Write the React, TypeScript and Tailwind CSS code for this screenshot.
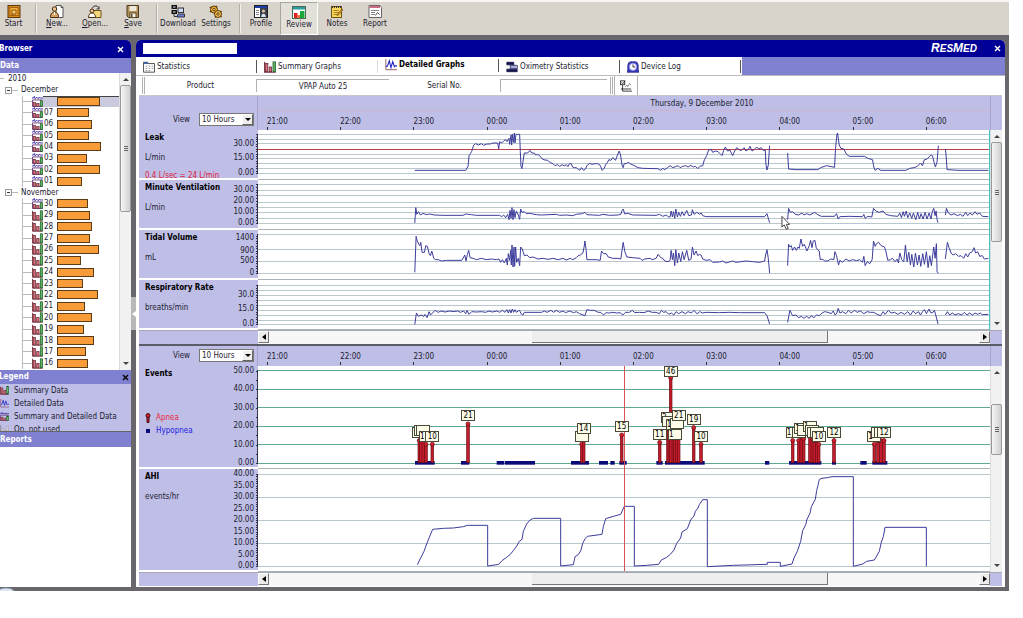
import { Fragment, ReactNode } from "react"
import clsx from "clsx"

/* ---------- Icons ---------- */

const icons: Record<string, ReactNode> = {
	start: (
		<>
			<rect x="1" y="0.5" width="12" height="12" fill="#d98a1c" stroke="#5b3a10" />
			<rect x="3" y="2.5" width="8" height="8" fill="#f5b53c" stroke="#a8620f" />
			<path d="M5 5h4v4H6l-1 1z" fill="#fbd56a" stroke="#8a4a08" />
		</>
	),
	newPatient: (
		<>
			<path d="M6 .5h5l2 2v10H6z" fill="#fff" stroke="#555" />
			<path d="M11 .5v2h2" fill="none" stroke="#555" />
			<circle cx="4.5" cy="4" r="2.2" fill="#f2c48c" stroke="#4a3012" />
			<path d="M.5 12.5c0-4 1.500-5.500 4-5.500s4 1.500 4 5.500z" fill="#d9a066" stroke="#4a3012" />
			<path d="M4.500 7v3" stroke="#fff" />
		</>
	),
	open: (
		<>
			<path d="M4 5.500h9v7H3z" fill="#f4d77a" stroke="#6b5218" />
			<path d="M4 3.500c2-4 6-3 7 0M11 4V1.500M11 4H8.500" fill="none" stroke="#333" />
			<circle cx="4" cy="6" r="2" fill="#f2c48c" stroke="#4a3012" />
			<path d="M.5 12.500c0-3 1.500-4.500 3.500-4.500s3.500 1.500 3.500 4.500z" fill="#fff" stroke="#4a3012" />
		</>
	),
	save: (
		<>
			<path d="M1 .5h11.500v12H2.500L1 11z" fill="#b08d57" stroke="#4a3a1c" />
			<rect x="3.500" y="1" width="7" height="5" fill="#efe9dc" />
			<rect x="4" y="8" width="6" height="4.500" fill="#f7f3e9" stroke="#5b4a28" />
			<rect x="5" y="9" width="1.500" height="3" fill="#5b4a28" />
		</>
	),
	download: (
		<>
			<rect x=".5" y="0" width="5.500" height="4" fill="#111" />
			<rect x=".5" y="5" width="5.500" height="4" fill="#111" />
			<path d="M2 2h2.500M2 7h2.500" stroke="#f0f0f0" strokeWidth="1.200" />
			<path d="M3 9v2.500h3" fill="none" stroke="#333" />
			<rect x="7" y="3" width="5.500" height="4.500" fill="#cfdaf6" stroke="#333" />
			<path d="M6 12h7.500V9H7z" fill="#6d7fd0" stroke="#334" />
		</>
	),
	settings: (
		<>
			<circle cx="5" cy="4.500" r="3.500" fill="#f0a92c" stroke="#5a3a08" />
			<circle cx="5" cy="4.500" r="1.200" fill="#fff4d0" stroke="#5a3a08" />
			<circle cx="9" cy="9" r="3.500" fill="#f3c04e" stroke="#5a3a08" />
			<circle cx="9" cy="9" r="1.200" fill="#fff4d0" stroke="#5a3a08" />
			<path d="M1 2l1 1M8 1L7 2M1 7l1-1M12.500 12l-1-1M12.500 6l-1 1M6 12.500l1-1" stroke="#5a3a08" strokeWidth="1.400" />
		</>
	),
	profile: (
		<>
			<rect x=".5" y=".5" width="13" height="12" fill="#fff" stroke="#222" />
			<rect x="1" y="1" width="12" height="2" fill="#1d3fa8" />
			<path d="M2 5.500h3M2 7.500h3M2 9.500h3" stroke="#888" />
			<rect x="6" y="3" width="7" height="9.500" fill="#39404f" />
			<circle cx="9.500" cy="6" r="1.600" fill="#e8c29a" />
			<path d="M7.200 12c0-4.500 4.600-4.500 4.600 0z" fill="#dfe4f0" />
		</>
	),
	review: (
		<>
			<rect x=".5" y=".5" width="13" height="12" fill="#fff" stroke="#4a6a5a" />
			<rect x="1" y="1" width="12" height="2.500" fill="#2f9c9c" />
			<rect x="2" y="7" width="3.500" height="5" fill="#e02020" />
			<rect x="5.500" y="9" width="2.500" height="3" fill="#f06a30" />
			<rect x="8" y="5" width="4.500" height="7" fill="#18a83c" />
		</>
	),
	notes: (
		<>
			<rect x="1.500" y="1.500" width="10" height="11" fill="#f7d65a" stroke="#6b5218" />
			<path d="M2 2h9" stroke="#333" strokeDasharray="1 1" strokeWidth="2" />
			<path d="M3.500 5.500h5M3.500 7.500h6M3.500 9.500h4" stroke="#a8862a" />
			<path d="M13 5L8.500 10l-1.500.5.500-1.500L12 4z" fill="#e8a030" stroke="#5a3a08" strokeWidth=".6" />
		</>
	),
	report: (
		<>
			<path d="M1 .5h11l1.500 2v10H1z" fill="#fff" stroke="#666" />
			<rect x="1.500" y="1" width="10.500" height="2" fill="#d06a80" />
			<path d="M3 5.500h8M3 7.500h4M3 9.500h4" stroke="#888" />
			<path d="M7.500 10.500l2-3 2 2" fill="none" stroke="#555" />
		</>
	),
	statistics: (
		<>
			<path d="M.5 1.500h5l1 1.500h7v10H.5z" fill="#fff" stroke="#333" />
			<path d="M1 2.500h5" stroke="#3a66a8" strokeWidth="2" />
			<path d="M3 6h2M6.500 6h2M10 6h2M3 8.500h2M6.500 8.500h2M10 8.500h2M3 11h2M6.500 11h2" stroke="#888" />
		</>
	),
	summary: (
		<>
			<path d="M.7 1v12h13" fill="none" stroke="#7a3040" strokeWidth="1.200" />
			<rect x="1.500" y="3" width="3" height="9.500" fill="#d8707c" stroke="#5a1a24" strokeWidth=".8" />
			<rect x="6" y="7" width="3" height="5.500" fill="#d8707c" stroke="#5a1a24" strokeWidth=".8" />
			<rect x="10.500" y="1" width="3" height="11.500" fill="#5cb864" stroke="#124a18" strokeWidth=".8" />
		</>
	),
	detailed: (
		<>
			<path d="M1 0v12.500h13" fill="none" stroke="#8a4a60" />
			<path d="M1 9l2-1 2-6 2 8 2-7 2 6 1-1h2" fill="none" stroke="#2626c8" strokeWidth="1.300" />
		</>
	),
	both: (
		<>
			<path d="M0 2.500h2l1-2 1 3 2-2 2 2 1-2 1 1h4" fill="none" stroke="#3a2aa8" strokeWidth="1.200" />
			<path d="M.7 5v8.500h13M.7 5h13" fill="none" stroke="#6a3a78" strokeWidth="1.200" />
			<rect x="1.500" y="8" width="3" height="5" fill="#d8707c" stroke="#5a1a24" strokeWidth=".8" />
			<rect x="6" y="9.500" width="3" height="3.500" fill="#d8707c" stroke="#5a1a24" strokeWidth=".8" />
			<rect x="10.500" y="6" width="3" height="7" fill="#5cb864" stroke="#124a18" strokeWidth=".8" />
		</>
	),
	unused: (
		<>
			<path d="M1 0v12.500h13" fill="none" stroke="#777" />
			<path d="M3 5h2v7H3zM7 8h2v4H7zM11 2h2v10h-2z" fill="#eee" stroke="#888" strokeWidth=".7" />
		</>
	),
	oximetry: (
		<>
			<path d="M1 1.500h8v3H1zM4 9.500h9v3H1v-3z" fill="#14144a" stroke="#14144a" />
			<path d="M5 5h7a2 2 0 0 1 0 4H5z" fill="#aab0d8" stroke="#2a2a60" />
		</>
	),
	deviceLog: (
		<>
			<path d="M2 2l2-1h6l2 1 1 3v5l1 3H0l1-3V5z" fill="#3a3ac0" stroke="#22228a" />
			<circle cx="7" cy="6.800" r="4.300" fill="#f8f8ff" stroke="#8a8ae8" />
			<path d="M7 4v3h2.500" fill="none" stroke="#222" />
		</>
	),
	chartOptions: (
		<>
			<rect x=".5" y="1" width="5" height="4.500" fill="#fff" stroke="#222" />
			<path d="M2 3l1 1.500L6 1" fill="none" stroke="#222" />
			<path d="M3 6v7h11M1 10.500h12" fill="none" stroke="#222" />
			<path d="M6 8l2-2 1 2 2-4 2 2" fill="none" stroke="#777" />
		</>
	),
}

function Icon({ name, className }: { name: string; className?: string }) {
	return (
		<svg viewBox="0 0 14 14" className={clsx("shrink-0", className)} aria-hidden="true">
			{icons[name]}
		</svg>
	)
}

/* ---------- Data ---------- */

const toolGroups = [
	[{ icon: "start", label: "Start" }],
	[
		{ icon: "newPatient", label: "New...", mnemonic: true },
		{ icon: "open", label: "Open...", mnemonic: true },
		{ icon: "save", label: "Save", mnemonic: true },
	],
	[
		{ icon: "download", label: "Download" },
		{ icon: "settings", label: "Settings" },
	],
	[
		{ icon: "profile", label: "Profile" },
		{ icon: "review", label: "Review", pressed: true },
		{ icon: "notes", label: "Notes" },
		{ icon: "report", label: "Report" },
	],
]

const months = [
	{
		name: "December",
		days: [
			["", 43], ["07", 32], ["06", 35], ["05", 32], ["04", 44], ["03", 30], ["02", 43], ["01", 25],
		] as [string, number][],
	},
	{
		name: "November",
		days: [
			["30", 31], ["29", 33], ["28", 35], ["27", 33], ["26", 42], ["25", 24], ["24", 37], ["23", 26],
			["22", 41], ["21", 28], ["20", 35], ["19", 27], ["18", 37], ["17", 29], ["16", 31],
		] as [string, number][],
	},
]

const legend = [
	{ icon: "summary", label: "Summary Data" },
	{ icon: "detailed", label: "Detailed Data" },
	{ icon: "both", label: "Summary and Detailed Data" },
	{ icon: "unused", label: "On, not used" },
]

const tabs = [
	{ icon: "statistics", label: "Statistics" },
	{ icon: "summary", label: "Summary Graphs" },
	{ icon: "detailed", label: "Detailed Graphs" },
	{ icon: "oximetry", label: "Oximetry Statistics" },
	{ icon: "deviceLog", label: "Device Log" },
]

const hours = ["21:00", "22:00", "23:00", "00:00", "01:00", "02:00", "03:00", "04:00", "05:00", "06:00"]

// Traces use three units per pixel; the early and late part of the night
// each have their own origin.
const EARLY = 426
const LATE = 1326

type Trace = [number, string]

type Chart = {
	title: string
	unit?: string
	note?: string
	labels: string[]
	zero: number
	scale: number
	minor: number
	top: number
	grid: number[]
	limit?: number
	traces: Trace[]
}

const signalCharts: Chart[] = [
	{
		title: "Leak",
		unit: "L/min",
		note: "0.4 L/sec = 24 L/min",
		labels: ["30.00", "15.00", "0.00"],
		zero: 43,
		scale: 0.97,
		minor: 2.5,
		top: 15,
		grid: [4, 9, 13, 24, 28, 33, 38, 43],
		limit: 19,
		traces: [
			[EARLY, "45,136 198,136 205,124 208,92 212,86 216,79 222,60 228,56 236,60 245,56 252,61 262,57 272,57 280,54 294,54 297,72 300,50 306,54 312,48 318,44 322,50 328,40 330,58 334,30 336,60 338,28 341,52 344,24 346,54 349,28 354,28 360,28 362,80 364,124 367,131 370,110 374,84 384,84 391,76 396,84 404,84 408,90 414,88 420,92 428,102 436,105 444,106 452,113 460,116 466,122 474,119 480,124 488,119 494,123 500,119 505,125 510,116 515,116 519,126 524,128 530,128 536,133 541,136 546,128 552,136 558,132 562,122 570,115 578,118 586,116 594,116 602,121 608,136 614,130 618,120 624,112 628,104 634,106 640,98 644,102 648,106 654,90 659,78 663,90 668,122 671,128 674,116 680,116 686,112 694,117 704,122 716,128 730,130 775,131 783,136 790,130 796,134 804,128 812,122 820,128 828,125 836,122 842,128 850,124 858,122 866,126 874,121 882,126 888,124 894,130 900,127"],
			[LATE, "0,124 10,122 15,104 22,92 28,74 36,74 40,82 48,78 56,80 62,86 68,92 73,76 78,66 84,78 92,76 96,84 100,92 106,78 112,68 118,72 124,78 134,68 140,78 148,72 152,64 158,78 164,74 172,66 178,72 186,68 192,76 198,76 200,120 203,135 207,120 211,62"],
			[LATE, "265,84 268,132 290,134 356,134 364,128 382,122 406,127 409,70 413,30 415,24 420,60 425,70 434,72 442,88 450,94 496,94 506,100 520,104 524,126 528,136 536,130 545,136 620,136 632,130 645,128 655,124 664,114 670,122 676,104 684,102 690,96 696,90 700,92 705,112 709,126 714,110 718,62"],
			[LATE, "739,72 741,90 744,134 780,136 868,136"],
		],
	},
	{
		title: "Minute Ventilation",
		unit: "L/min",
		labels: ["30.00", "20.00", "10.00", "0.00"],
		zero: 43,
		scale: 1.11,
		minor: 2.5,
		top: 165,
		grid: [4, 10, 15, 22, 27, 32, 38, 43],
		traces: [
			[EARLY, "45,294 48,248 51,268 56,260 62,270 70,265 80,269 90,267 104,270 130,271 190,271 198,267 206,268 215,269 230,271 300,271 306,275 312,270 318,278 324,268 328,284 331,256 334,280 337,248 340,284 343,254 346,278 350,258 356,270 360,283 363,252 367,262 374,260 380,266 390,265 400,267 410,269 425,270 470,268 480,271 500,270 520,272 530,268 548,266 556,262 562,269 580,270 600,271 610,268 630,271 655,270 664,268 668,256 671,252 676,267 684,265 700,270 770,271 780,268 790,274 800,270 808,276 812,276 815,258 819,276 822,260 826,280 829,252 834,276 838,262 843,274 848,260 854,272 862,256 868,272 876,270 879,254 884,268 892,262 900,267"],
			[LATE, "0,268 5,264 10,272 20,275 196,275 203,266 207,280 211,293"],
			[LATE, "265,284 268,250 273,262 280,260 288,268 298,270 308,264 314,270 322,266 332,270 346,262 354,268 366,274 406,274 412,266 417,282 422,275 450,274 490,275 494,268 498,280 506,274 518,276 523,250 530,258 540,262 552,258 560,268 575,272 596,274 602,264 607,278 612,260 616,274 621,258 626,278 632,264 638,280 643,264 650,284 656,262 661,282 666,266 672,282 678,262 684,282 690,264 696,282 699,262 704,250 708,272 711,258 714,284 717,293"],
			[LATE, "739,270 742,250 748,264 756,270 765,266 775,272 784,268 792,274 800,262 806,272 813,264 820,270 828,260 834,268 842,264 850,274 868,275"],
		],
	},
	{
		title: "Tidal Volume",
		unit: "mL",
		labels: ["1400", "900", "500", "0"],
		zero: 43,
		scale: 0.025,
		minor: 100,
		top: 315,
		grid: [4, 19, 31, 43],
		traces: [
			[EARLY, "45,442 49,334 53,350 60,362 63,352 67,382 74,382 78,362 83,364 88,386 92,392 96,378 102,400 108,404 116,404 125,408 140,406 186,406 192,396 195,390 199,408 203,388 207,376 211,398 220,400 230,404 245,400 260,404 275,402 290,404 298,402 303,412 308,404 314,414 320,400 323,420 326,386 330,406 333,376 335,420 337,360 340,426 343,366 345,424 348,366 351,412 356,400 360,422 363,366 368,372 374,392 382,390 390,398 400,396 415,402 430,400 445,403 460,400 476,404 490,400 500,405 512,400 520,404 530,398 536,392 542,390 550,384 554,364 556,348 560,376 562,404 590,404 602,406 606,378 612,386 620,386 626,396 640,400 655,400 664,402 667,380 671,352 676,380 682,396 700,398 722,400 728,406 736,402 752,400 758,404 770,400 776,388 784,398 790,400 796,408 806,410 812,406 815,376 819,404 822,384 826,422 829,374 834,414 838,384 844,410 849,380 854,404 862,376 868,406 875,402 879,366 884,390 890,378 895,392 900,388"],
			[LATE, "0,388 5,390 10,402 20,406 32,404 40,412 60,411 70,408 80,414 100,408 110,412 140,408 160,410 180,412 196,408 199,390 203,374 207,400 211,444"],
			[LATE, "265,422 268,358 272,366 276,362 280,376 286,366 291,376 296,366 300,370 305,342 310,364 315,358 320,370 323,378 330,362 334,346 338,368 342,348 347,346 351,368 355,374 360,378 363,404 370,402 376,408 386,408 394,402 404,404 407,380 412,392 418,420 422,406 430,412 440,402 450,408 460,404 472,407 482,404 490,412 494,394 498,422 504,410 512,416 519,404 523,348 528,364 532,356 538,352 546,362 556,366 560,378 566,406 574,404 580,400 588,410 594,402 598,414 602,384 608,404 614,410 619,360 624,410 629,382 634,420 638,388 644,426 649,384 655,420 660,390 665,424 671,386 676,418 682,380 687,428 692,392 697,422 700,396 704,366 708,400 712,356 714,440 718,445"],
			[LATE, "739,402 745,352 750,368 756,384 762,390 770,386 778,394 786,392 794,400 800,386 806,396 812,384 820,380 825,368 830,384 836,380 842,394 850,392 856,402 868,400"],
		],
	},
	{
		title: "Respiratory Rate",
		unit: "breaths/min",
		labels: ["30.0", "15.0", "0.0"],
		zero: 44,
		scale: 0.97,
		minor: 2.5,
		top: 465,
		grid: [5, 10, 15, 20, 25, 30, 35, 40, 44],
		traces: [
			[EARLY, "45,598 50,564 56,574 64,570 72,574 76,568 82,578 88,560 92,570 98,564 106,556 115,562 124,558 136,561 150,558 160,560 174,558 182,562 192,558 198,566 202,556 208,568 216,560 230,561 245,560 258,562 268,558 278,561 292,558 300,562 308,556 316,562 322,554 326,564 330,554 334,564 338,552 342,562 346,554 350,562 356,558 360,556 364,566 370,570 374,562 426,562 434,558 442,562 454,556 462,562 470,556 480,562 490,558 498,563 510,558 522,563 530,560 540,566 556,572 562,554 572,556 584,556 596,562 604,562 612,570 620,563 630,564 640,562 652,564 662,563 670,570 678,562 690,562 698,556 706,563 720,562 734,563 746,558 758,562 770,562 780,566 786,556 792,562 800,560 808,568 816,564 823,570 830,560 838,566 848,560 858,566 866,560 876,564 884,556 892,566 900,562"],
			[LATE, "0,558 8,564 20,562 60,563 90,562 120,563 196,563 203,572 211,597"],
			[LATE, "265,592 272,556 280,572 290,570 298,578 306,574 314,580 322,574 330,580 336,572 344,578 352,570 360,572 366,566 376,560 386,562 396,566 402,558 408,570 413,564 417,550 422,564 430,560 440,566 448,556 456,564 466,556 474,562 484,558 494,566 504,560 514,562 524,562 534,568 544,572 552,560 558,568 568,556 576,564 586,562 596,568 606,562 616,568 626,560 634,570 642,558 650,566 658,560 664,570 670,560 676,554 682,566 690,552 694,562 700,564 706,556 710,570 717,597"],
			[LATE, "739,570 745,560 752,570 760,564 768,570 778,566 788,570 796,562 804,570 812,564 820,570 828,564 836,568 844,564 850,569 868,568"],
		],
	},
]

const eventsChart: Chart = {
	title: "Events",
	labels: ["50.00", "40.00", "30.00", "20.00", "10.00", "0.00"],
	zero: 97,
	scale: 1.85,
	minor: 5,
	top: 78,
	grid: [4, 23, 41, 60, 78, 97],
	traces: [],
}

const ahiChart: Chart = {
	title: "AHI",
	unit: "events/hr",
	labels: ["40.00", "35.00", "30.00", "25.00", "20.00", "15.00", "10.00", "5.00", "0.00"],
	zero: 97,
	scale: 2.3,
	minor: 1,
	top: 387,
	grid: [5, 28, 51, 74, 97],
	traces: [
		[EARLY, "52,674 62,654 72,634 80,612 88,592 98,568 130,565 160,564 190,560 202,556 263,556 263,678 296,673 306,662 320,652 330,644 340,632 350,618 358,604 366,598 370,574 380,552 390,540 400,535 482,535 482,678 520,674 525,650 535,644 543,630 548,610 556,595 562,589 606,583 610,560 617,536 640,529 662,523 668,510 673,499 703,499 703,678 740,676 776,673 784,660 800,652 812,642 822,630 830,610 842,594 846,576 862,566 872,540 882,528 886,514 894,504 898,494 908,479 922,479 922,680"],
		[LATE, "22,680 100,676 202,673 202,667 241,667 241,679 276,672 282,654 292,634 302,604 308,572 318,552 320,540 330,520 334,500 346,478 350,452 354,436 358,418 366,415 382,413 396,410 460,410 460,679 488,672 500,664 523,660 530,648 538,634 544,606 550,590 555,562 679,562 679,679"],
	],
}

// x in trace units, duration in seconds, and what is left readable of the
// flag where the next ones cover it
type Apnea = [number, number, string]

const apneas: Apnea[] = [
	[EARLY + 58, 12, ""], [EARLY + 63, 13, ""], [EARLY + 70, 13, ""], [EARLY + 78, 10, "1"],
	[EARLY + 97, 10, "10"], [EARLY + 204, 21, "21"], [EARLY + 545, 10, ""], [EARLY + 551, 14, "14"],
	[EARLY + 665, 15, "15"], [EARLY + 779, 11, "11"], [EARLY + 804, 20, "2"], [EARLY + 808, 18, ""],
	[EARLY + 818, 16, "1"], [EARLY + 825, 11, "1"], [EARLY + 831, 17, ""], [EARLY + 812, 46, "46"],
	[EARLY + 836, 21, "21"], [EARLY + 881, 19, "19"], [EARLY + 903, 10, "10"],
	[LATE + 278, 12, "1"], [LATE + 296, 12, ""], [LATE + 304, 14, "1"], [LATE + 311, 13, ""],
	[LATE + 330, 15, "1"], [LATE + 337, 13, ""], [LATE + 343, 12, ""], [LATE + 350, 12, ""],
	[LATE + 356, 10, "10"], [LATE + 402, 12, "12"], [LATE + 523, 10, "1"], [LATE + 534, 12, ""],
	[LATE + 543, 12, ""], [LATE + 552, 12, "12"],
]

const hypopneas: [number, number][] = [
	[EARLY + 45, 59], [EARLY + 183, 25], [EARLY + 290, 23], [EARLY + 315, 90], [EARLY + 513, 54],
	[EARLY + 597, 27], [EARLY + 631, 13], [EARLY + 658, 22], [EARLY + 769, 19], [EARLY + 795, 119],
	[LATE + 195, 13], [LATE + 267, 97], [LATE + 396, 12], [LATE + 481, 19], [LATE + 517, 45],
]

const PLOT_WIDTH = 2196
const CURSOR_X = EARLY + 673

/* ---------- Toolbar ---------- */

function Toolbar() {
	return (
		<nav className="flex h-[35px] border-t-2 border-[#f6f5f2] bg-[#d8d4cb]">
			{toolGroups.map((group, i) => (
				<Fragment key={i}>
					{i > 0 && <span className="my-[2px] mr-px ml-1 w-[2px] border-l border-[#b3afa6] bg-[#f4f2ee]" />}
					{group.map((tool) => (
						<button
							key={tool.label}
							className={clsx(
								"flex flex-col items-center pt-[3px] leading-[10px] whitespace-nowrap",
								i === 0 ? "w-[31px] pr-1" : "w-[38px]",
								tool.pressed && "border border-t-[#aaa69d] border-r-white border-b-white border-l-[#aaa69d] bg-[#e3e0da]"
							)}
						>
							<Icon name={tool.icon} className="h-[14px] w-[14px]" />
							<span>
								{tool.mnemonic ? (
									<>
										<u>{tool.label[0]}</u>
										{tool.label.slice(1)}
									</>
								) : (
									tool.label
								)}
							</span>
						</button>
					))}
				</Fragment>
			))}
		</nav>
	)
}

/* ---------- Scroll bars ---------- */

function Arrow({ dir }: { dir: "up" | "down" | "left" | "right" }) {
	const shapes = { up: "M0 5h6L3 2z", down: "M0 1h6L3 4z", left: "M5 0v6L1 3z", right: "M1 0v6l4-3z" }
	return (
		<svg viewBox="0 0 6 6" className="h-[6px] w-[6px] shrink-0" aria-hidden="true">
			<path d={shapes[dir]} fill="currentColor" />
		</svg>
	)
}

function VerticalScroll({ thumb }: { thumb: string }) {
	return (
		<div className="flex w-3 shrink-0 flex-col items-center border-l border-[#dcdcdc] bg-[#f2f1f1] text-[#444]">
			<span className="flex h-3 items-center">
				<Arrow dir="up" />
			</span>
			<div className="min-h-0 w-full flex-1">
				<div
					className={clsx(
						"flex w-full flex-col items-center justify-center gap-px rounded-[2px] border border-[#999] bg-linear-to-r from-[#f6f6f6] to-[#cfcfd2]",
						thumb
					)}
				>
					<span className="h-px w-1 bg-[#666]" />
					<span className="h-px w-1 bg-[#666]" />
					<span className="h-px w-1 bg-[#666]" />
				</div>
			</div>
			<span className="flex h-3 items-center">
				<Arrow dir="down" />
			</span>
		</div>
	)
}

function HorizontalScroll() {
	const button =
		"flex w-[11px] items-center justify-center border border-t-white border-r-[#777] border-b-[#777] border-l-white bg-[#eeecea] text-black"
	return (
		<div className="flex h-[14px] border-t border-[#a8a8b4] bg-[#bebee6]">
			<div className="w-[119px] shrink-0" />
			<div className="flex min-w-0 flex-1 bg-[#f8f7f7] pb-px">
				<button aria-label="Scroll left" className={button}>
					<Arrow dir="left" />
				</button>
				<div className="flex flex-1">
					<div className="w-[37%]" />
					<div className="w-5/12 border-r border-b border-[#777] bg-[#efeeee]" />
				</div>
				<button aria-label="Scroll right" className={button}>
					<Arrow dir="right" />
				</button>
			</div>
			<div className="w-3 shrink-0" />
		</div>
	)
}

/* ---------- Browser panel ---------- */

function DayRow({ day, width, icon, selected }: { day: string; width: number; icon: string; selected?: boolean }) {
	return (
		<li className="flex min-h-0 items-center pl-[22px]">
			<span className="flex h-full items-center border-l border-[#bbb]">
				<span className="w-[9px] border-t border-[#bbb]" />
			</span>
			<Icon name={icon} className="h-[11px] w-[11px]" />
			<span
				className={clsx(
					"flex h-full flex-1 items-center pl-px",
					selected && "border-t border-[#444] bg-[#cacade]"
				)}
			>
				<span className="w-[13px]">{day}</span>
				<span className="h-[9px] border border-[#5a3c18] bg-[#f79c38]" style={{ width }} />
			</span>
		</li>
	)
}

function BrowserPanel() {
	return (
		<aside className="flex w-[131px] shrink-0 flex-col overflow-hidden rounded-tr-[5px] bg-white">
			<header className="flex h-[18px] items-center justify-between bg-[#000096] pr-[7px] font-bold text-white">
				<h2 className="-ml-px">Browser</h2>
				<button aria-label="Close browser">
					<CloseMark />
				</button>
			</header>
			<h3 className="h-[15px] bg-[#8080d0] leading-[15px] font-bold text-white">Data</h3>
			<div className="flex h-[297px]">
				<ul className="grid flex-1 auto-rows-fr pb-px leading-[10px]">
					<li className="flex min-h-0 items-center gap-1">
						<span className="w-1 border-t border-[#bbb]" />
						2010
					</li>
					{months.map((month, m) => (
						<Fragment key={month.name}>
							<li className="flex min-h-0 items-center pl-[5px]">
								<span className="flex h-[7px] w-[7px] items-center justify-center border border-[#999]">
									<span className="h-px w-[3px] bg-[#333]" />
								</span>
								<span className="mr-[3px] w-[6px] border-t border-[#bbb]" />
								{month.name}
							</li>
							{month.days.map(([day, width], i) => (
								<DayRow
									key={i}
									day={day}
									width={width}
									icon={m === 0 || i === 0 ? "both" : "summary"}
									selected={m === 0 && i === 0}
								/>
							))}
						</Fragment>
					))}
				</ul>
				<VerticalScroll thumb="h-[127px]" />
			</div>
			<header className="flex h-[14px] items-center justify-between bg-[#8080d0] pr-[2px] font-bold text-white">
				<h3 className="-ml-px">Legend</h3>
				<button aria-label="Close legend" className="text-black">
					<CloseMark />
				</button>
			</header>
			<ul className="h-[48px] overflow-hidden border-b border-[#666] bg-[#bebee6]">
				{legend.map((item) => (
					<li key={item.label} className="flex h-[13px] items-center gap-[5px] whitespace-nowrap">
						<Icon name={item.icon} className="h-[9px] w-[9px]" />
						{item.label}
					</li>
				))}
			</ul>
			<h3 className="h-[15px] bg-[#8080d0] leading-[15px] font-bold text-white">Reports</h3>
		</aside>
	)
}

function CloseMark() {
	return (
		<svg viewBox="0 0 7 7" className="h-[7px] w-[7px]" aria-hidden="true">
			<path d="M1 1l5 5M6 1L1 6" stroke="currentColor" strokeWidth="1.400" />
		</svg>
	)
}

/* ---------- Charts ---------- */

function Axis({ chart }: { chart: Chart }) {
	const first = parseFloat(chart.labels[0])
	const end = Math.min(chart.grid[0], chart.zero - first * chart.scale)
	const count = Math.floor((chart.zero - end) / (chart.minor * chart.scale)) + 1
	return (
		<>
			{chart.labels.map((label) => (
				<span
					key={label}
					className="absolute right-1 leading-[10px]"
					style={{ top: Math.round(chart.zero - parseFloat(label) * chart.scale) - 5 }}
				>
					{label}
				</span>
			))}
			<svg className="absolute top-0 right-0 h-full w-[4px]" shapeRendering="crispEdges" aria-hidden="true">
				<path d={`M3.500 ${end}V${chart.zero + 1}`} stroke="#33334a" />
				{Array.from({ length: count }, (_, i) => (
					<path key={i} d={`M1.500 ${Math.round(chart.zero - i * chart.minor * chart.scale) + 0.5}h2`} stroke="#33334a" />
				))}
			</svg>
		</>
	)
}

function ChartRow({
	chart,
	tall,
	info,
	children,
}: {
	chart: Chart
	tall?: boolean
	info?: ReactNode
	children?: ReactNode
}) {
	const height = tall ? 103 : 50
	return (
		<section className={clsx("flex", tall ? "h-[103px]" : "h-[50px]")}>
			<div className="relative w-[119px] shrink-0 overflow-hidden border-b-2 border-white bg-[#bebee6] pt-[2px] pl-[6px]">
				<h4 className="leading-[12px] font-bold text-black">{chart.title}</h4>
				{chart.unit && <p className="mt-2 leading-[12px]">{chart.unit}</p>}
				{chart.note && <p className="mt-[6px] leading-[12px] text-[#e0203c]">{chart.note}</p>}
				{info}
				<Axis chart={chart} />
			</div>
			<div className="relative min-w-0 flex-1 overflow-hidden">
				<svg
					viewBox={`0 ${chart.top} ${PLOT_WIDTH} ${height * 3}`}
					preserveAspectRatio="none"
					className="h-full w-full"
					aria-hidden="true"
				>
					<g shapeRendering="crispEdges">
						{chart.grid.map((y) => (
							<rect
								key={y}
								y={chart.top + y * 3}
								width={PLOT_WIDTH}
								height="3"
								fill={chart.title === "Events" ? "#5fa893" : "#b9c8cf"}
							/>
						))}
						<rect y={chart.top + (height - 1) * 3} width={PLOT_WIDTH} height="3" fill="#a9b4b8" />
						{chart.limit && (
							<rect y={chart.top + chart.limit * 3} width={PLOT_WIDTH} height="3" fill="#b8434d" />
						)}
					</g>
					{chart.traces.map(([x, points], i) => (
						<polyline
							key={i}
							points={points}
							transform={`translate(${x} 0)`}
							fill="none"
							stroke="#3c3c9c"
							strokeWidth="3"
						/>
					))}
					{children}
				</svg>
				{chart.title === "Events" && <EventFlags />}
			</div>
		</section>
	)
}

function EventMarks() {
	return (
		<>
			{hypopneas.map(([x, width]) => (
				<rect key={x} x={x} y="363" width={width} height="11" fill="#0a0a78" />
			))}
			{apneas.map(([x, value]) => (
				<g key={x} stroke="#6a0c14">
					<rect x={x - 4} y={368 - value * 5.54} width="8" height={value * 5.54} fill="#c41c2c" strokeWidth="2" />
					<circle cx={x} cy={368 - value * 5.54} r="6" fill="#d0202c" strokeWidth="2" />
				</g>
			))}
		</>
	)
}

function EventFlags() {
	return (
		<>
			{apneas.map(([x, value, label]) => (
				<span
					key={x}
					className={clsx(
						"absolute h-[11px] w-[14px] -translate-x-1/2 border border-[#4a4a3a] bg-[#fdfdea] leading-[9px] text-black",
						label.length > 1 ? "text-center" : "text-left"
					)}
					style={{ left: `${(x / PLOT_WIDTH) * 100}%`, top: Math.max(0, Math.round(83 - value * 1.85)) }}
				>
					{label}
				</span>
			))}
		</>
	)
}

function Cursor() {
	return <rect x={CURSOR_X - 1} y="78" width="3" height="615" fill="#d8525a" shapeRendering="crispEdges" />
}

function ViewSelect({ id }: { id: string }) {
	return (
		<div className="flex w-[119px] shrink-0 items-end justify-end gap-[9px] border-r border-[#a4a4cc] pr-[3px] pb-1">
			<label htmlFor={id} className="leading-[12px]">
				View
			</label>
			<div className="relative">
				<select
					id={id}
					defaultValue="10 Hours"
					className="block h-[13px] w-[55px] appearance-none border border-[#777] bg-white pl-[2px] leading-[11px]"
				>
					<option>10 Hours</option>
				</select>
				<span className="pointer-events-none absolute top-px right-px flex h-[11px] w-[11px] items-center justify-center border border-t-white border-r-[#666] border-b-[#666] border-l-white bg-[#efeeec] text-black">
					<Arrow dir="down" />
				</span>
			</div>
		</div>
	)
}

function TimeScale() {
	return (
		<div className="grid h-[19px] grid-cols-10 items-end">
			{hours.map((hour) => (
				<div key={hour} className="pl-[9px]">
					<div className="leading-[10px]">{hour}</div>
					<div className="h-[3px] border-l border-[#333]" />
				</div>
			))}
		</div>
	)
}

/* ---------- Main panel ---------- */

function DeviceBar() {
	return (
		<div className="flex h-5 items-center border-b border-[#c8c8c8] bg-white">
			<Handle />
			<label htmlFor="product" className="w-[111px] text-center">
				Product
			</label>
			<input
				id="product"
				readOnly
				defaultValue="VPAP Auto 25"
				className="h-[13px] w-[133px] border-t border-l border-[#b0b0b0] text-center"
			/>
			<label htmlFor="serial" className="w-[111px] text-center">
				Serial No.
			</label>
			<input id="serial" readOnly className="h-[13px] w-[107px] border-t border-l border-[#b0b0b0]" />
			<Handle />
			<button
				aria-label="Chart options"
				className="ml-px flex h-full w-[24px] items-center justify-center border-r border-l border-[#b0b0b0]"
			>
				<Icon name="chartOptions" className="h-3 w-3" />
			</button>
		</div>
	)
}

function Handle() {
	return <span className="ml-[3px] h-[17px] w-[3px] border-r border-l border-[#b0b0b0]" />
}

function MainPanel() {
	return (
		<main className="flex min-w-0 flex-1 flex-col overflow-hidden rounded-t-[5px] bg-white">
			<header className="flex h-[17px] items-center bg-[#000096] pr-1 pl-[7px] text-white">
				<span className="h-[11px] w-[94px] bg-white" />
				<span className="ml-auto font-['Liberation_Sans',sans-serif] text-[12px] leading-[16px] font-bold italic">
					R<span className="text-[10px]">ES</span>M<span className="text-[10px]">ED</span>
				</span>
				<button aria-label="Close" className="ml-[17px]">
					<CloseMark />
				</button>
			</header>
			<div className="flex h-[19px] border-b border-[#bbb] bg-[#8080d0]">
				<div role="tablist" className="flex border-r border-white bg-white">
					{tabs.map((tab) => {
						const active = tab.label === "Detailed Graphs"
						return (
							<button
								key={tab.label}
								role="tab"
								aria-selected={active}
								className={clsx(
									"flex w-[121px] items-center whitespace-nowrap",
									active ? "pb-[2px] font-bold text-black" : "pt-px"
								)}
							>
								<Icon name={tab.icon} className="ml-[7px] h-[12px] w-[12px]" />
								<span className="ml-[2px] flex-1 text-left">{tab.label}</span>
								<span className={clsx("h-[13px] w-px", tab.label === "Summary Graphs" ? "bg-[#ddd]" : "bg-[#555]")} />
							</button>
						)
					})}
				</div>
			</div>
			<div className="mx-[3px] mb-px">
				<DeviceBar />
				<div className="flex h-[34px] bg-[#bebee6]">
					<ViewSelect id="view-signals" />
					<div className="flex min-w-0 flex-1 flex-col border-r border-[#a4a4cc]">
						<div className="h-[15px] border-b border-[#d0b4cc] pl-[156px] text-center leading-[15px]">
							Thursday, 9 December 2010
						</div>
						<TimeScale />
					</div>
					<div className="w-[11px] shrink-0" />
				</div>
				<div className="flex">
					<div className="min-w-0 flex-1 border-r border-[#3cc8c8]">
						{signalCharts.map((chart) => (
							<ChartRow key={chart.title} chart={chart}>
								{chart.title === "Minute Ventilation" && (
									<path
										d="M1574 274v32l7-6 6 13 6-3-6-12h10z"
										fill="#fff"
										stroke="#444"
										strokeWidth="3"
									/>
								)}
							</ChartRow>
						))}
					</div>
					<VerticalScroll thumb="h-[100px]" />
				</div>
				<HorizontalScroll />
				<div className="h-[2px] bg-[#5c5c68]" />
				<div className="flex h-5 bg-[#bebee6]">
					<ViewSelect id="view-events" />
					<div className="min-w-0 flex-1 border-r border-[#a4a4cc]">
						<TimeScale />
					</div>
					<div className="w-[11px] shrink-0" />
				</div>
				<div className="flex">
					<div className="min-w-0 flex-1">
						<ChartRow
							chart={eventsChart}
							tall
							info={
								<ul className="mt-[31px] leading-[13px]">
									<li className="flex items-center gap-[5px] text-[#e8283c]">
										<svg viewBox="0 0 6 10" className="h-[10px] w-[6px]" aria-hidden="true">
											<path d="M2 3h2v6.500H2z" fill="#c41c2c" stroke="#4a0c14" />
											<circle cx="3" cy="2.500" r="2" fill="#d0202c" stroke="#4a0c14" />
										</svg>
										Apnea
									</li>
									<li className="flex items-center gap-[6px] text-[#2020e0]">
										<span className="ml-px h-1 w-1 bg-[#0a0a78]" />
										Hypopnea
									</li>
								</ul>
							}
						>
							<EventMarks />
							<Cursor />
						</ChartRow>
						<ChartRow chart={ahiChart} tall>
							<Cursor />
						</ChartRow>
					</div>
					<VerticalScroll thumb="mt-[26px] h-[51px]" />
				</div>
				<HorizontalScroll />
			</div>
		</main>
	)
}

function App() {
	return (
		<div className="min-h-screen bg-white pr-[14px] font-['DejaVu_Sans_Condensed','DejaVu_Sans',sans-serif] text-[8px] text-[#1c1c30]">
			<Toolbar />
			<div className="relative flex bg-[#69666c] pt-[5px] pr-1 pb-1">
				<BrowserPanel />
				<div className="flex w-[5px] shrink-0 items-center">
					<button
						aria-label="Collapse browser"
						className="flex h-[33px] w-full items-center justify-center bg-[#b8b8b8] text-white"
					>
						<Arrow dir="left" />
					</button>
				</div>
				<MainPanel />
				<svg viewBox="0 0 14 4" className="absolute bottom-0 left-0 h-1 w-[14px]" aria-hidden="true">
					<ellipse cx="6" cy="5" rx="8" ry="4" fill="#dfe8f2" stroke="#8aa0b8" />
				</svg>
			</div>
		</div>
	)
}

export default App
